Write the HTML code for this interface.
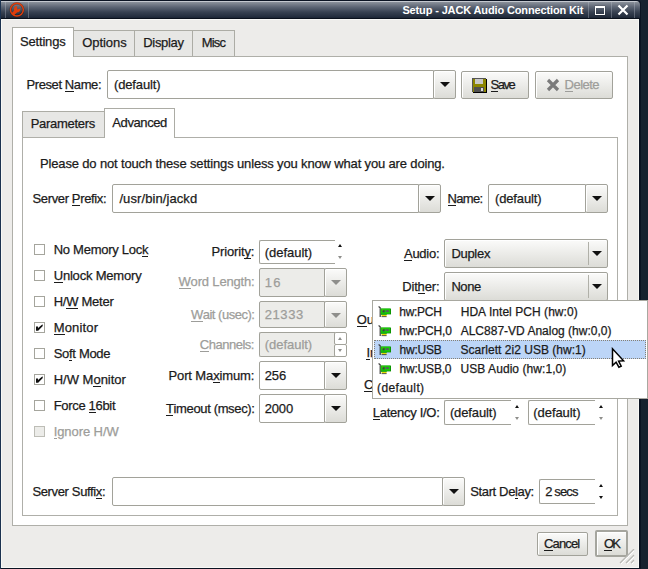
<!DOCTYPE html>
<html><head><meta charset="utf-8">
<style>
*{margin:0;padding:0;box-sizing:border-box}
html,body{width:648px;height:569px;overflow:hidden;background:#17212f}
body{position:relative;font-family:"Liberation Sans",sans-serif;font-size:13px;color:#1b1b1b}
.a{position:absolute}
.t{position:absolute;white-space:nowrap;line-height:15px;font-size:13px;-webkit-text-stroke:0.25px currentColor}
.r{text-align:right}
.dis{color:#9b9b98}
u{text-decoration:none;position:relative}
u:after{content:"";position:absolute;left:0;right:0;bottom:0px;height:1px;background:currentColor}
.fld{position:absolute;background:#fff;border:1px solid #a2a29a;border-radius:2px}
.fdis{background:#ecece9}
.btn{position:absolute;border:1px solid #a2a29a;border-radius:2px;background:linear-gradient(#fbfbfa,#dcdcd7);box-shadow:inset 1px 1px 0 #fff}
.arr{position:absolute;width:0;height:0;border-left:5px solid transparent;border-right:5px solid transparent;border-top:5px solid #111}
.arrd{border-top-color:#8e8e8b}
.pane{position:absolute;background:#fff;border:1px solid #afafa9}
.tab{position:absolute;background:#e7e7e5;border:1px solid #acaca5;border-bottom:none}
.tabs{position:absolute;background:#fff;border:1px solid #acaca5;border-bottom:none}
.cb{position:absolute;width:11px;height:11px;border:1px solid #a5a59d;background:#fff}
.cbd{background:#ecece9;border-color:#bdbdb6}
.sep{position:absolute;width:1px;background:rgba(190,196,206,0.35)}
.up{position:absolute;width:0;height:0;border-left:2.5px solid transparent;border-right:2.5px solid transparent;border-bottom:3px solid #111}
.dn{position:absolute;width:0;height:0;border-left:2.5px solid transparent;border-right:2.5px solid transparent;border-top:3px solid #8e8e8b}
</style></head><body>
<!-- window frame -->
<div class="a" style="left:0;top:0;width:641px;height:569px;background:#0b1322;border-top-right-radius:4px"></div>
<div class="a" style="left:0;top:1px;width:640px;height:18px;background:linear-gradient(#c4c8cf 0px,#c4c8cf 1px,#8b919b 1px,#5d6574 6px,#384252 11px,#222c3c 16px,#1a2333 17px,#0a111c 17px);border-top-right-radius:4px"></div>
<div class="a" style="left:0;top:0;width:1px;height:569px;background:#1b3250"></div>
<div class="a" style="left:1px;top:19px;width:638px;height:549px;background:#f8f8f5"></div>
<div class="a" style="left:2px;top:20px;width:636px;height:547px;background:#edecea"></div>
<!-- title bar -->
<div class="sep" style="left:5px;top:2px;height:16px"></div>
<div class="sep" style="left:28px;top:2px;height:16px"></div>
<div class="sep" style="left:588px;top:2px;height:16px"></div>
<div class="sep" style="left:611px;top:2px;height:16px"></div>
<div class="sep" style="left:634px;top:2px;height:16px"></div>
<svg class="a" style="left:9px;top:2px" width="16" height="16" viewBox="0 0 16 16">
<defs><mask id="wm"><rect width="16" height="16" fill="#fff"/><path d="M8.3 7.5 L7.9 3.2 L12.4 6.1 Z" fill="#000"/></mask></defs>
<circle cx="7.9" cy="7.7" r="6.3" fill="none" stroke="#1a1410" stroke-width="2.4" opacity="0.5"/>
<circle cx="7.9" cy="7.7" r="6.4" fill="none" stroke="#e23e0c" stroke-width="1.5"/>
<g mask="url(#wm)" fill="#e23e0c">
<circle cx="8.1" cy="7.2" r="3.1"/>
<path d="M6.0 7.8 L8.4 10.0 L4.8 13.4 L2.6 11.2 Z"/>
</g>
</svg>
<div class="a" style="left:595px;top:6px;width:10px;height:9px;border:2px solid #fff;border-width:2px 1.8px 1.8px 1.8px;box-shadow:0 0 1px rgba(0,0,0,0.6)"></div>
<svg class="a" style="left:617px;top:4px" width="12" height="12" viewBox="0 0 12 12"><path d="M1.5 1.5 L10.5 10.5 M10.5 1.5 L1.5 10.5" stroke="#fff" stroke-width="2.2"/></svg>
<!-- outer tab widget -->
<div class="pane" style="left:12px;top:56px;width:616px;height:470px"></div>
<div class="tab" style="left:73px;top:30px;width:62px;height:26px"></div>
<div class="tab" style="left:134px;top:30px;width:59px;height:26px"></div>
<div class="tab" style="left:192px;top:30px;width:43px;height:26px"></div>
<div class="tabs" style="left:12px;top:27px;width:62px;height:30px"></div>
<!-- preset row -->
<div class="fld" style="left:107px;top:70px;width:327px;height:29px;border-radius:2px 0 0 2px"></div>
<div class="btn" style="left:433px;top:70px;width:23px;height:29px"></div>
<div class="arr" style="left:440px;top:82px"></div>
<div class="btn" style="left:461px;top:71px;width:68px;height:28px"></div>
<svg class="a" style="left:472px;top:78px" width="15" height="15" viewBox="0 0 15 15">
<rect x="0" y="0" width="14" height="14" fill="#8c8600"/>
<rect x="1" y="14" width="14" height="1" fill="#000"/><rect x="14" y="1" width="1" height="14" fill="#000"/>
<rect x="0" y="0" width="14" height="1" fill="#555"/><rect x="0" y="0" width="1" height="14" fill="#555"/>
<rect x="3" y="1" width="8" height="5" fill="#c9c9c9"/>
<rect x="2" y="9" width="10" height="5" fill="#505050"/>
<rect x="9" y="10" width="2" height="3" fill="#ddd"/>
</svg>
<div class="btn" style="left:535px;top:71px;width:78px;height:28px"></div>
<svg class="a" style="left:546px;top:78px" width="14" height="14" viewBox="0 0 14 14"><path d="M2 2 L12 12 M12 2 L2 12" stroke="#7b7b7b" stroke-width="3.2"/></svg>
<!-- inner tab widget -->
<div class="pane" style="left:22px;top:137px;width:596px;height:379px"></div>
<div class="tab" style="left:22px;top:111px;width:83px;height:26px"></div>
<div class="tabs" style="left:104px;top:108px;width:71px;height:30px"></div>
<div class="fld" style="left:112px;top:184px;width:307px;height:29px;border-radius:2px 0 0 2px"></div>
<div class="btn" style="left:418px;top:184px;width:23px;height:29px"></div>
<div class="arr" style="left:425px;top:196px"></div>
<div class="fld" style="left:488px;top:184px;width:98px;height:29px;border-radius:2px 0 0 2px"></div>
<div class="btn" style="left:585px;top:184px;width:23px;height:29px"></div>
<div class="arr" style="left:592px;top:196px"></div>
<!-- checkboxes -->
<div class="cb" style="left:34px;top:244px"></div>
<div class="cb" style="left:34px;top:270px"></div>
<div class="cb" style="left:34px;top:296px"></div>
<div class="cb" style="left:34px;top:322px"></div>
<svg class="a" style="left:35px;top:323px" width="9" height="9" viewBox="0 0 9 9"><path d="M1 3.5 L3 3.5 L3 5 L7.5 1.2 L7.8 3 L3.2 7.8 L1 7.8 Z" fill="#111"/></svg>
<div class="cb" style="left:34px;top:348px"></div>
<div class="cb" style="left:34px;top:374px"></div>
<svg class="a" style="left:35px;top:375px" width="9" height="9" viewBox="0 0 9 9"><path d="M1 3.5 L3 3.5 L3 5 L7.5 1.2 L7.8 3 L3.2 7.8 L1 7.8 Z" fill="#111"/></svg>
<div class="cb" style="left:34px;top:400px"></div>
<div class="cb cbd" style="left:34px;top:426px"></div>
<!-- middle column -->
<div class="fld" style="left:259px;top:240px;width:76px;height:24px;border-right:none;border-radius:2px 0 0 2px"></div>
<div class="up" style="left:338px;top:244px"></div>
<div class="dn" style="left:338px;top:256px"></div>
<div class="fld fdis" style="left:259px;top:268px;width:66px;height:29px;border-radius:2px 0 0 2px"></div>
<div class="btn" style="left:324px;top:268px;width:23px;height:29px"></div>
<div class="arr arrd" style="left:331px;top:280px"></div>
<div class="fld fdis" style="left:259px;top:301px;width:66px;height:27px;border-radius:2px 0 0 2px"></div>
<div class="btn" style="left:324px;top:301px;width:23px;height:27px"></div>
<div class="arr arrd" style="left:331px;top:313px"></div>
<div class="fld fdis" style="left:259px;top:332px;width:76px;height:25px;border-right:none;border-radius:2px 0 0 2px"></div>
<div class="fld" style="left:334px;top:332px;width:13px;height:13px;border-width:1.5px"></div>
<div class="fld" style="left:334px;top:344px;width:13px;height:13px;border-width:1.5px"></div>
<div class="up" style="left:338px;top:337px;border-bottom-color:#8e8e8b"></div>
<div class="dn" style="left:338px;top:349px"></div>
<div class="fld" style="left:259px;top:361px;width:66px;height:29px;border-radius:2px 0 0 2px"></div>
<div class="btn" style="left:324px;top:361px;width:23px;height:29px"></div>
<div class="arr" style="left:331px;top:373px"></div>
<div class="fld" style="left:259px;top:394px;width:66px;height:29px;border-radius:2px 0 0 2px"></div>
<div class="btn" style="left:324px;top:394px;width:23px;height:29px"></div>
<div class="arr" style="left:331px;top:406px"></div>
<!-- right column -->
<div class="btn" style="left:444px;top:239px;width:164px;height:29px"></div>
<div class="a" style="left:588px;top:242px;width:1px;height:23px;background:#b0b0a8"></div>
<div class="arr" style="left:592px;top:251px"></div>
<div class="btn" style="left:444px;top:272px;width:164px;height:29px"></div>
<div class="a" style="left:588px;top:275px;width:1px;height:23px;background:#b0b0a8"></div>
<div class="arr" style="left:592px;top:284px"></div>
<div class="fld" style="left:444px;top:400px;width:67px;height:25px;border-right:none;border-radius:2px 0 0 2px"></div>
<div class="up" style="left:515px;top:405px"></div>
<div class="dn" style="left:515px;top:417px"></div>
<div class="fld" style="left:528px;top:400px;width:67px;height:25px;border-right:none;border-radius:2px 0 0 2px"></div>
<div class="up" style="left:599px;top:405px"></div>
<div class="dn" style="left:599px;top:417px"></div>
<!-- bottom row -->
<div class="fld" style="left:112px;top:477px;width:331px;height:29px;border-radius:2px 0 0 2px"></div>
<div class="btn" style="left:442px;top:477px;width:23px;height:29px"></div>
<div class="arr" style="left:448.5px;top:489px"></div>
<div class="fld" style="left:539px;top:479px;width:56px;height:25px;border-right:none;border-radius:2px 0 0 2px"></div>
<div class="up" style="left:599px;top:484px"></div>
<div class="dn" style="left:599px;top:496px;border-top-color:#111"></div>
<!-- dialog buttons -->
<div class="btn" style="left:537px;top:532px;width:51px;height:24px"></div>
<div class="btn" style="left:595px;top:530px;width:33px;height:27px;border:2px solid #a5a59e"></div>
<svg class="a" style="left:619px;top:549px" width="16" height="16" viewBox="0 0 16 16">
<path d="M1 14 L15 0 M7 14 L15 6 M12 14 L15 11" stroke="#b8b8b4" stroke-width="1.2"/>
<path d="M2 15 L15 2 M8 15 L15 8 M13 15 L15 13" stroke="#fff" stroke-width="1"/>
</svg>
<div class="t" style="left:402.40px;top:2.50px;font-size:11px;letter-spacing:-0.136px;color:#fff;font-weight:bold;-webkit-text-stroke:0">Setup - JACK Audio Connection Kit</div>
<div class="t" style="left:20.00px;top:34.00px;letter-spacing:-0.181px">Settings</div>
<div class="t" style="left:82.20px;top:35.00px;letter-spacing:-0.050px">Options</div>
<div class="t" style="left:143.30px;top:35.00px;letter-spacing:-0.321px">Display</div>
<div class="t" style="left:201.70px;top:35.00px;letter-spacing:-0.805px">Misc</div>
<div class="t" style="left:26.50px;top:77.00px;letter-spacing:-0.406px">Preset <u>N</u>ame:</div>
<div class="t" style="left:114.00px;top:77.00px;letter-spacing:-0.148px">(default)</div>
<div class="t" style="left:490.60px;top:77.00px;letter-spacing:-1.542px"><u>S</u>ave</div>
<div class="t" style="left:564.60px;top:77.00px;letter-spacing:-0.517px;color:#9d9d9a"><u>D</u>elete</div>
<div class="t" style="left:30.70px;top:116.00px;letter-spacing:-0.300px">Parameters</div>
<div class="t" style="left:112.30px;top:115.00px;letter-spacing:-0.403px">Advanced</div>
<div class="t" style="left:40.00px;top:156.00px;letter-spacing:-0.153px">Please do not touch these settings unless you know what you are doing.</div>
<div class="t" style="left:32.50px;top:191.00px;letter-spacing:-0.365px">Server <u>P</u>refix:</div>
<div class="t" style="left:119.40px;top:191.00px;letter-spacing:0.093px">/usr/bin/jackd</div>
<div class="t" style="left:447.60px;top:191.00px;letter-spacing:-0.671px"><u>N</u>ame:</div>
<div class="t" style="left:495.00px;top:191.00px;letter-spacing:-0.148px">(default)</div>
<div class="t" style="left:53.70px;top:242.00px;letter-spacing:-0.268px">No Memory Loc<u>k</u></div>
<div class="t" style="left:53.70px;top:268.00px;letter-spacing:-0.192px"><u>U</u>nlock Memory</div>
<div class="t" style="left:53.70px;top:294.00px;letter-spacing:-0.264px">H/<u>W</u> Meter</div>
<div class="t" style="left:53.70px;top:320.00px;letter-spacing:0.174px"><u>M</u>onitor</div>
<div class="t" style="left:53.70px;top:346.00px;letter-spacing:-0.307px">So<u>f</u>t Mode</div>
<div class="t" style="left:53.70px;top:372.00px">H/W M<u>o</u>nitor</div>
<div class="t" style="left:53.70px;top:398.00px;letter-spacing:-0.323px">Force <u>1</u>6bit</div>
<div class="t" style="left:53.70px;top:424.00px;letter-spacing:-0.082px;color:#9d9d9a"><u>I</u>gnore H/W</div>
<div class="t" style="left:211.40px;top:244.00px;letter-spacing:-0.132px">Priorit<u>y</u>:</div>
<div class="t" style="left:178.50px;top:274.00px;letter-spacing:-0.173px;color:#9d9d9a"><u>W</u>ord Length:</div>
<div class="t" style="left:190.90px;top:306.50px;letter-spacing:-0.487px;color:#9d9d9a"><u>W</u>ait (usec):</div>
<div class="t" style="left:199.80px;top:336.50px;letter-spacing:-0.492px;color:#9d9d9a"><u>C</u>hannels:</div>
<div class="t" style="left:168.50px;top:368.00px;letter-spacing:-0.125px">Port Ma<u>x</u>imum:</div>
<div class="t" style="left:165.90px;top:400.50px;letter-spacing:-0.351px"><u>T</u>imeout (msec):</div>
<div class="t" style="left:264.70px;top:244.50px;letter-spacing:-0.023px">(default)</div>
<div class="t" style="left:264.70px;top:275.00px;letter-spacing:1.344px;color:#9d9d9a">16</div>
<div class="t" style="left:264.70px;top:307.00px;letter-spacing:0.612px;color:#9d9d9a">21333</div>
<div class="t" style="left:264.70px;top:337.00px;letter-spacing:-0.023px;color:#9d9d9a">(default)</div>
<div class="t" style="left:264.70px;top:368.00px;letter-spacing:-0.092px">256</div>
<div class="t" style="left:264.70px;top:401.00px;letter-spacing:-0.142px">2000</div>
<div class="t" style="left:404.00px;top:246.00px;letter-spacing:-0.271px"><u>A</u>udio:</div>
<div class="t" style="left:451.40px;top:246.00px;letter-spacing:-0.294px">Duplex</div>
<div class="t" style="left:402.20px;top:279.00px;letter-spacing:-0.164px">Dit<u>h</u>er:</div>
<div class="t" style="left:451.40px;top:279.00px;letter-spacing:-0.428px">None</div>
<div class="t" style="left:356.70px;top:312.00px"><u>O</u>utput Device:</div>
<div class="t" style="left:366.40px;top:345.00px"><u>I</u>nput Device:</div>
<div class="t" style="left:364.00px;top:377.00px"><u>C</u>hannels I/O:</div>
<div class="t" style="left:372.80px;top:405.00px;letter-spacing:-0.281px"><u>L</u>atency I/O:</div>
<div class="t" style="left:449.90px;top:405.00px;letter-spacing:-0.111px">(default)</div>
<div class="t" style="left:533.30px;top:405.00px;letter-spacing:-0.061px">(default)</div>
<div class="t" style="left:32.40px;top:484.00px;letter-spacing:-0.353px">Server Suffi<u>x</u>:</div>
<div class="t" style="left:470.20px;top:484.00px;letter-spacing:-0.356px">Start De<u>l</u>ay:</div>
<div class="t" style="left:545.20px;top:484.00px;letter-spacing:-0.854px">2 secs</div>
<div class="t" style="left:544.00px;top:536.00px;letter-spacing:-0.854px"><u>C</u>ancel</div>
<div class="t" style="left:603.90px;top:536.00px;letter-spacing:-1.785px"><u>O</u>K</div>

<!-- popup -->
<div class="a" style="left:372px;top:300px;width:276px;height:99px;background:#fff;border:1px solid #a8a8a0"></div>
<div class="a" style="left:374px;top:340px;width:272px;height:19px;background:#bcd5f7;border:1px dotted #857f74"></div>
<svg width="0" height="0" style="position:absolute"><defs>
<g id="card">
<path d="M0.6 0.6 L2.2 1.8 L2.2 11" stroke="#3a3a3a" stroke-width="1.2" fill="none"/>
<rect x="2.8" y="2.6" width="10.2" height="5.8" fill="#0a8a00"/>
<rect x="2.8" y="2.6" width="9.4" height="5.2" fill="#18c808"/>
<rect x="2.8" y="8.2" width="6" height="0.8" fill="#12a000"/>
<rect x="4.6" y="4.2" width="2" height="2.2" fill="#3d3d48"/>
<rect x="7.8" y="4.2" width="3" height="1.8" fill="#5a5a60"/>
<rect x="4.4" y="3.6" width="0.8" height="0.8" fill="#c9a000"/>
<rect x="3.6" y="9" width="5" height="1.3" fill="#e8dc00"/>
<rect x="3.6" y="10.3" width="5" height="0.8" fill="#2a2a2a"/>
</g></defs></svg>
<svg class="a" style="left:378px;top:306px" width="14" height="12"><use href="#card"/></svg>
<svg class="a" style="left:378px;top:325px" width="14" height="12"><use href="#card"/></svg>
<svg class="a" style="left:378px;top:344px" width="14" height="12"><use href="#card"/></svg>
<svg class="a" style="left:378px;top:363px" width="14" height="12"><use href="#card"/></svg>
<div class="t" style="left:399.30px;top:304.50px;font-size:12px;letter-spacing:-0.283px">hw:PCH</div>
<div class="t" style="left:460.70px;top:304.50px;font-size:12px;letter-spacing:0.051px">HDA Intel PCH (hw:0)</div>
<div class="t" style="left:399.30px;top:323.50px;font-size:12px;letter-spacing:-0.216px">hw:PCH,0</div>
<div class="t" style="left:460.70px;top:323.50px;font-size:12px">ALC887-VD Analog (hw:0,0)</div>
<div class="t" style="left:399.50px;top:342.50px;font-size:12px;letter-spacing:-0.229px">hw:USB</div>
<div class="t" style="left:460.50px;top:342.50px;font-size:12px;letter-spacing:0.027px">Scarlett 2i2 USB (hw:1)</div>
<div class="t" style="left:399.50px;top:361.50px;font-size:12px;letter-spacing:-0.193px">hw:USB,0</div>
<div class="t" style="left:460.50px;top:361.50px;font-size:12px;letter-spacing:0.063px">USB Audio (hw:1,0)</div>
<div class="t" style="left:377.10px;top:380.50px;font-size:12px;letter-spacing:0.373px">(default)</div>

<!-- cursor -->
<svg class="a" style="left:611px;top:347px" width="16" height="22" viewBox="0 0 16 22">
<path d="M1.5 1.8 L1.5 18.6 L5.1 15.2 L7.9 20.2 L10.2 19.2 L7.6 14.1 L12.6 13.8 Z" fill="#fff" stroke="#000" stroke-width="1.5" stroke-linejoin="miter"/>
</svg>
</body></html>
